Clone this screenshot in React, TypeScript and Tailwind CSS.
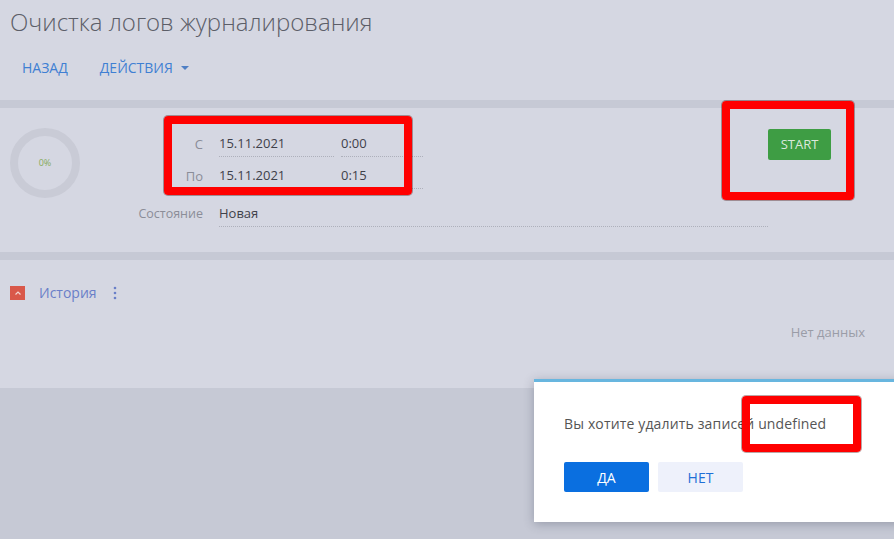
import React from "react";

const font = { fontFamily: '"Open Sans", "Noto Sans", sans-serif' };

const Field = ({ value, width }: { value: string; width: string }) => (
  <div
    className={`${width} h-[32px] flex items-end pb-[3px] border-b border-dotted border-[#aeb0bb] text-[13px] leading-[20px] text-[#3f414a]`}
  >
    {value}
  </div>
);

const RedBox = ({ className }: { className: string }) => (
  <div
    className={`absolute border-[8px] border-[#ff0000] rounded-[4px] shadow-[0_0_0_1px_rgba(60,0,0,0.35)] pointer-events-none ${className}`}
  />
);

const App = () => {
  return (
    <div
      style={font}
      className="relative w-[894px] h-[539px] overflow-hidden bg-[#c6c9d5]"
    >
      {/* header */}
      <div className="h-[100px] bg-[#d5d7e2] pl-[10px] pt-[4px]">
        <h1 className="text-[24px] leading-[36px] font-light text-[#5c5e68]">
          Очистка логов журналирования
        </h1>
        <div className="mt-[18px] pl-[12px] flex items-center gap-[32px] text-[14px] leading-[20px] text-[#3f7fd3]">
          <span>НАЗАД</span>
          <span className="flex items-center gap-[8px]">
            ДЕЙСТВИЯ
            <span className="w-0 h-0 border-l-[4px] border-r-[4px] border-t-[4px] border-l-transparent border-r-transparent border-t-[#4f7fc4]" />
          </span>
        </div>
      </div>

      {/* main panel */}
      <div className="mt-[8px] h-[144px] bg-[#d5d7e2] flex items-start pl-[10px]">
        <div className="mt-[20px] w-[70px] h-[70px] rounded-full border-[8px] border-[#c9cbd6] flex items-center justify-center">
          <span className="text-[9px] text-[#86ab5b]">0%</span>
        </div>

        <div className="mt-[17px] flex flex-col">
          <div className="flex items-end">
            <div className="w-[124px] pr-[1px] pb-[3px] text-right text-[13px] leading-[20px] text-[#8b8d98]">
              С
            </div>
            <div className="ml-[15px] flex gap-[7px]">
              <Field value="15.11.2021" width="w-[115px]" />
              <Field value="0:00" width="w-[82px]" />
            </div>
          </div>
          <div className="flex items-end">
            <div className="w-[124px] pr-[1px] pb-[3px] text-right text-[13px] leading-[20px] text-[#8b8d98]">
              По
            </div>
            <div className="ml-[15px] flex gap-[7px]">
              <Field value="15.11.2021" width="w-[115px]" />
              <Field value="0:15" width="w-[82px]" />
            </div>
          </div>
          <div className="mt-[6px] flex items-end">
            <div className="w-[124px] pr-[1px] pb-[3px] text-right text-[12.5px] leading-[20px] text-[#8b8d98]">
              Состояние
            </div>
            <div className="ml-[15px]">
              <Field value="Новая" width="w-[549px]" />
            </div>
          </div>
        </div>

        <div className="flex-1" />
        <button className="mt-[21px] mr-[63px] w-[63px] h-[31px] rounded-[2px] bg-[#3e9d44] text-[13px] text-[#dbe8dc]">
          START
        </button>
      </div>

      {/* history */}
      <div className="mt-[8px] h-[128px] bg-[#d5d7e2] pt-[23px]">
        <div className="flex items-center h-[20px] pl-[10px]">
          <div className="w-[15px] h-[14px] bg-[#d9584a] flex items-center justify-center">
            <svg width="8" height="6" viewBox="0 0 8 6">
              <path d="M1.5 4.5 L4 2 L6.5 4.5" stroke="#f3d6d2" strokeWidth="1.2" fill="none" />
            </svg>
          </div>
          <span className="ml-[14px] text-[14px] leading-[20px] text-[#6a7fc8]">История</span>
          <svg className="ml-[16px]" width="4" height="14" viewBox="0 0 4 14">
            <circle cx="2" cy="2" r="1.3" fill="#6a7fc8" />
            <circle cx="2" cy="7" r="1.3" fill="#6a7fc8" />
            <circle cx="2" cy="12" r="1.3" fill="#6a7fc8" />
          </svg>
        </div>
        <div className="mt-[19px] pr-[29px] text-right text-[13px] leading-[20px] text-[#9a9ca7]">
          Нет данных
        </div>
      </div>

      {/* dialog */}
      <div className="absolute left-[534px] top-[379px] w-[370px] h-[143px] bg-white border-t-[3px] border-[#68b6df] shadow-[0_2px_10px_rgba(40,45,70,0.3)] pl-[30px] pt-[32px]">
        <p className="text-[14px] leading-[20px] tracking-[0.15px] text-[#555555]">
          Вы хотите удалить записей undefined
        </p>
        <div className="mt-[28px] flex gap-[9px]">
          <button className="w-[85px] h-[30px] rounded-[2px] bg-[#0a6fe0] text-[14px] text-white">
            ДА
          </button>
          <button className="w-[85px] h-[30px] rounded-[2px] bg-[#eef1fb] text-[14px] text-[#1f6fd6]">
            НЕТ
          </button>
        </div>
      </div>

      {/* annotation boxes */}
      <RedBox className="left-[164px] top-[116px] w-[248px] h-[79px]" />
      <RedBox className="left-[722px] top-[101px] w-[132px] h-[99px]" />
      <RedBox className="left-[742px] top-[396px] w-[119px] h-[56px]" />
    </div>
  );
};

export default App;
